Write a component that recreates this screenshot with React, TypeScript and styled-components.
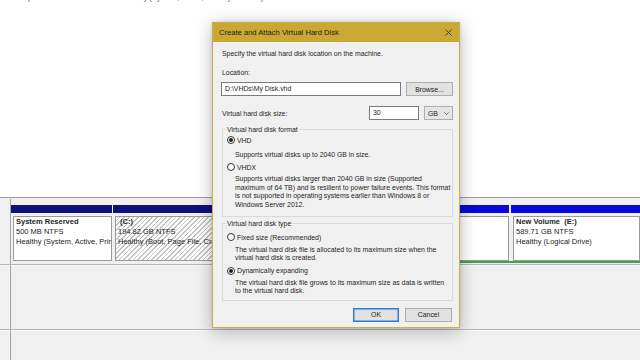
import React from 'react';
import styled, { createGlobalStyle } from 'styled-components';

const GlobalStyle = createGlobalStyle`
  html, body { margin: 0; padding: 0; width: 640px; height: 360px; overflow: hidden; background: #fff; }
  #root { width: 640px; height: 360px; }
  * { box-sizing: border-box; }
`;

const Screen = styled.div`
  position: relative;
  width: 640px;
  height: 360px;
  overflow: hidden;
  display: flex;
  flex-direction: column;
  font-family: "Liberation Sans", Arial, sans-serif;
  color: #1a1a1a;
`;

/* ---------- volume list (top pane) ---------- */
const VolumePane = styled.div`
  height: 197px;
  flex: none;
  background: #fff;
  overflow: hidden;
`;

const VolumeRow = styled.div`
  display: flex;
  height: 10px;
  margin-top: -7px;
  line-height: 10px;
  font-size: 7.5px;
  color: #4a4a4a;
  white-space: nowrap;
`;

const VolumeCell = styled.span<{ $w: number }>`
  flex: none;
  width: ${(p) => p.$w}px;
  overflow: hidden;
`;

/* ---------- graphical disk pane ---------- */
const Splitter = styled.div`
  height: 2px;
  flex: none;
  border-top: 1px solid #9c9c9c;
  background: #f0f0f0;
`;

const DiskPane = styled.div`
  flex: 1;
  background: #f0f0f0;
  display: flex;
  flex-direction: column;
`;

const DiskRow = styled.div<{ $h: number }>`
  flex: none;
  height: ${(p) => p.$h}px;
  display: flex;
  border-bottom: 1px solid #b4b4b4;
  box-shadow: 0 1px 0 #fafafa;
`;

const DiskLabel = styled.div`
  width: 11px;
  flex: none;
  border-right: 1px solid #a6a6a6;
`;

const Partitions = styled.div`
  flex: 1;
  display: flex;
  align-items: flex-start;
  gap: 1px;
  padding-top: 6px;
  overflow: hidden;
`;

const Extended = styled.div`
  flex: 1;
  display: flex;
  gap: 2px;
  border-bottom: 2px solid #3aa64a;
`;

const Cell = styled.div<{ $w?: number }>`
  flex: ${(p) => (p.$w ? 'none' : '1')};
  width: ${(p) => (p.$w ? `${p.$w}px` : 'auto')};
  display: flex;
  flex-direction: column;
  height: 56px;
`;

const CellHeader = styled.div<{ $color: string }>`
  height: 8px;
  flex: none;
  background: ${(p) => p.$color};
`;

const CellBody = styled.div`
  flex: 1;
  padding: 3px 0 0 2px;
  display: flex;
`;

const CellBox = styled.div<{ $hatched?: boolean }>`
  flex: 1;
  border: 1px solid #9a9a9a;
  background: ${(p) =>
    p.$hatched
      ? 'repeating-linear-gradient(135deg, #ffffff 0px, #ffffff 2.3px, #c4c4c4 2.3px, #c4c4c4 3.3px)'
      : '#ffffff'};
  padding: 0 2px;
  font-size: 7.5px;
  line-height: 10px;
  white-space: nowrap;
  overflow: hidden;
  color: #1e1e1e;
`;

const CellTitle = styled.div`
  font-weight: bold;
`;

/* ---------- dialog ---------- */
const Dialog = styled.div`
  position: absolute;
  left: 212px;
  top: 22px;
  width: 248px;
  display: flex;
  flex-direction: column;
  background: #f0f0f0;
  border: 1px solid #c9ae4a;
  box-shadow: 0 3px 16px rgba(0, 0, 0, 0.28), 0 0 3px rgba(0, 0, 0, 0.12);
  color: #1e1e1e;
  font-family: "Liberation Sans", Arial, sans-serif;
`;

const TitleBar = styled.div`
  height: 19px;
  flex: none;
  background: #c9a834;
  display: flex;
  align-items: center;
  justify-content: space-between;
  padding: 0 7px 0 6px;
  font-size: 7.6px;
  color: #1c1c1c;
`;

const CloseIcon = () => (
  <svg width="7" height="7" viewBox="0 0 7 7">
    <path d="M0.5 0.5 L6.5 6.5 M6.5 0.5 L0.5 6.5" stroke="#2a2a2a" strokeWidth="0.8" fill="none" />
  </svg>
);

const DialogBody = styled.div`
  display: flex;
  flex-direction: column;
  padding: 7px 6px 5px 8px;
  font-size: 6.9px;
`;

const Text = styled.div<{ $mt?: number; $indent?: number }>`
  line-height: 9px;
  margin-top: ${(p) => p.$mt ?? 0}px;
  padding-left: ${(p) => p.$indent ?? 1}px;
  white-space: nowrap;
`;

const FieldRow = styled.div<{ $mt: number }>`
  display: flex;
  align-items: center;
  gap: 5px;
  height: 14px;
  margin-top: ${(p) => p.$mt}px;
`;

const TextInput = styled.div<{ $w?: number }>`
  flex: ${(p) => (p.$w ? 'none' : '1')};
  width: ${(p) => (p.$w ? `${p.$w}px` : 'auto')};
  height: 14px;
  background: #fff;
  border: 1px solid #7a7a7a;
  padding: 0 3px;
  line-height: 12px;
  white-space: nowrap;
`;

const Spacer = styled.div`
  flex: 1;
`;

const Button = styled.div<{ $w: number; $default?: boolean }>`
  flex: none;
  width: ${(p) => p.$w}px;
  height: 14px;
  background: #e1e1e1;
  border: 1px solid ${(p) => (p.$default ? '#2b7fd0' : '#adadad')};
  box-shadow: ${(p) => (p.$default ? 'inset 0 0 0 0.5px #2b7fd0' : 'none')};
  display: flex;
  align-items: center;
  justify-content: center;
`;

const Combo = styled.div`
  flex: none;
  width: 29px;
  height: 14px;
  background: #e5e5e5;
  border: 1px solid #adadad;
  display: flex;
  align-items: center;
  justify-content: space-between;
  padding: 0 3px 0 3px;
`;

const Chevron = () => (
  <svg width="5" height="3" viewBox="0 0 5 3">
    <path d="M0.3 0.3 L2.5 2.5 L4.7 0.3" stroke="#444" strokeWidth="0.7" fill="none" />
  </svg>
);

const Group = styled.fieldset<{ $mt: number; $pb: number }>`
  margin: ${(p) => p.$mt}px 0 0 1px;
  padding: 0 4px ${(p) => p.$pb}px 4px;
  border: 1px solid #d9d9d9;
  min-width: 0;
`;

const Legend = styled.legend`
  padding: 0 1px;
  margin-left: -1px;
  line-height: 9px;
`;

const RadioRow = styled.div<{ $mt: number }>`
  display: flex;
  align-items: center;
  gap: 2px;
  height: 10px;
  margin-top: ${(p) => p.$mt}px;
`;

const Radio = styled.span<{ $checked?: boolean }>`
  width: 8px;
  height: 8px;
  border-radius: 50%;
  border: 1px solid #333;
  background: #fff;
  display: flex;
  align-items: center;
  justify-content: center;
  &::after {
    content: '';
    width: 4px;
    height: 4px;
    border-radius: 50%;
    background: ${(p) => (p.$checked ? '#222' : 'transparent')};
  }
`;

const Desc = styled.div<{ $mt: number }>`
  margin-top: ${(p) => p.$mt}px;
  padding-left: 8px;
  line-height: 8.4px;
  white-space: nowrap;
`;

const ButtonRow = styled.div`
  display: flex;
  justify-content: flex-end;
  gap: 6px;
  margin-top: 7px;
  padding-right: 1px;
`;

export default function App() {
  return (
    <Screen>
      <GlobalStyle />
      <VolumePane>
        <VolumeRow>
          <VolumeCell $w={15}>ved</VolumeCell>
          <VolumeCell $w={25}>Simple</VolumeCell>
          <VolumeCell $w={23}>Basic</VolumeCell>
          <VolumeCell $w={59}>NTFS</VolumeCell>
          <VolumeCell $w={201}>Healthy (System, Active, Primary Partition)</VolumeCell>
          <VolumeCell $w={42}>500 MB</VolumeCell>
          <VolumeCell $w={43}>465 MB</VolumeCell>
          <VolumeCell $w={40}>93 %</VolumeCell>
        </VolumeRow>
      </VolumePane>
      <Splitter />
      <DiskPane>
        <DiskRow $h={66}>
          <DiskLabel />
          <Partitions>
            <Cell $w={101}>
              <CellHeader $color="#10107c" />
              <CellBody>
                <CellBox>
                  <CellTitle>System Reserved</CellTitle>
                  <div>500 MB NTFS</div>
                  <div>Healthy (System, Active, Primary Partition)</div>
                </CellBox>
              </CellBody>
            </Cell>
            <Cell $w={272}>
              <CellHeader $color="#10107c" />
              <CellBody>
                <CellBox $hatched>
                  <CellTitle>&nbsp;(C:)</CellTitle>
                  <div>194.82 GB NTFS</div>
                  <div>Healthy (Boot, Page File, Crash Dump, Primary Partition)</div>
                </CellBox>
              </CellBody>
            </Cell>
            <Extended>
              <Cell $w={123}>
                <CellHeader $color="#0808d8" />
                <CellBody>
                  <CellBox />
                </CellBody>
              </Cell>
              <Cell>
                <CellHeader $color="#0808d8" />
                <CellBody>
                  <CellBox>
                    <CellTitle>New Volume&nbsp; (E:)</CellTitle>
                    <div>589.71 GB NTFS</div>
                    <div>Healthy (Logical Drive)</div>
                  </CellBox>
                </CellBody>
              </Cell>
            </Extended>
          </Partitions>
        </DiskRow>
        <DiskRow $h={65}>
          <DiskLabel />
        </DiskRow>
        <DiskRow $h={40}>
          <DiskLabel />
        </DiskRow>
      </DiskPane>

      <Dialog>
        <TitleBar>
          <span>Create and Attach Virtual Hard Disk</span>
          <CloseIcon />
        </TitleBar>
        <DialogBody>
          <Text>Specify the virtual hard disk location on the machine.</Text>
          <Text $mt={10}>Location:</Text>
          <FieldRow $mt={5}>
            <TextInput>D:\VHDs\My Disk.vhd</TextInput>
            <Button $w={47}>Browse...</Button>
          </FieldRow>
          <FieldRow $mt={10}>
            <Text>Virtual hard disk size:</Text>
            <Spacer />
            <TextInput $w={50}>30</TextInput>
            <Combo>
              <span>GB</span>
              <Chevron />
            </Combo>
          </FieldRow>
          <Group $mt={5} $pb={7}>
            <Legend>Virtual hard disk format</Legend>
            <RadioRow $mt={1}>
              <Radio $checked />
              <span>VHD</span>
            </RadioRow>
            <Desc $mt={6}>Supports virtual disks up to 2040 GB in size.</Desc>
            <RadioRow $mt={3}>
              <Radio />
              <span>VHDX</span>
            </RadioRow>
            <Desc $mt={3}>
              Supports virtual disks larger than 2040 GB in size (Supported
              <br />
              maximum of 64 TB) and is resilient to power failure events. This format
              <br />
              is not supported in operating systems earlier than Windows 8 or
              <br />
              Windows Server 2012.
            </Desc>
          </Group>
          <Group $mt={2} $pb={4}>
            <Legend>Virtual hard disk type</Legend>
            <RadioRow $mt={4}>
              <Radio />
              <span>Fixed size (Recommended)</span>
            </RadioRow>
            <Desc $mt={4}>
              The virtual hard disk file is allocated to its maximum size when the
              <br />
              virtual hard disk is created.
            </Desc>
            <RadioRow $mt={3}>
              <Radio $checked />
              <span>Dynamically expanding</span>
            </RadioRow>
            <Desc $mt={3}>
              The virtual hard disk file grows to its maximum size as data is written
              <br />
              to the virtual hard disk.
            </Desc>
          </Group>
          <ButtonRow>
            <Button $w={46} $default>OK</Button>
            <Button $w={47}>Cancel</Button>
          </ButtonRow>
        </DialogBody>
      </Dialog>
    </Screen>
  );
}
